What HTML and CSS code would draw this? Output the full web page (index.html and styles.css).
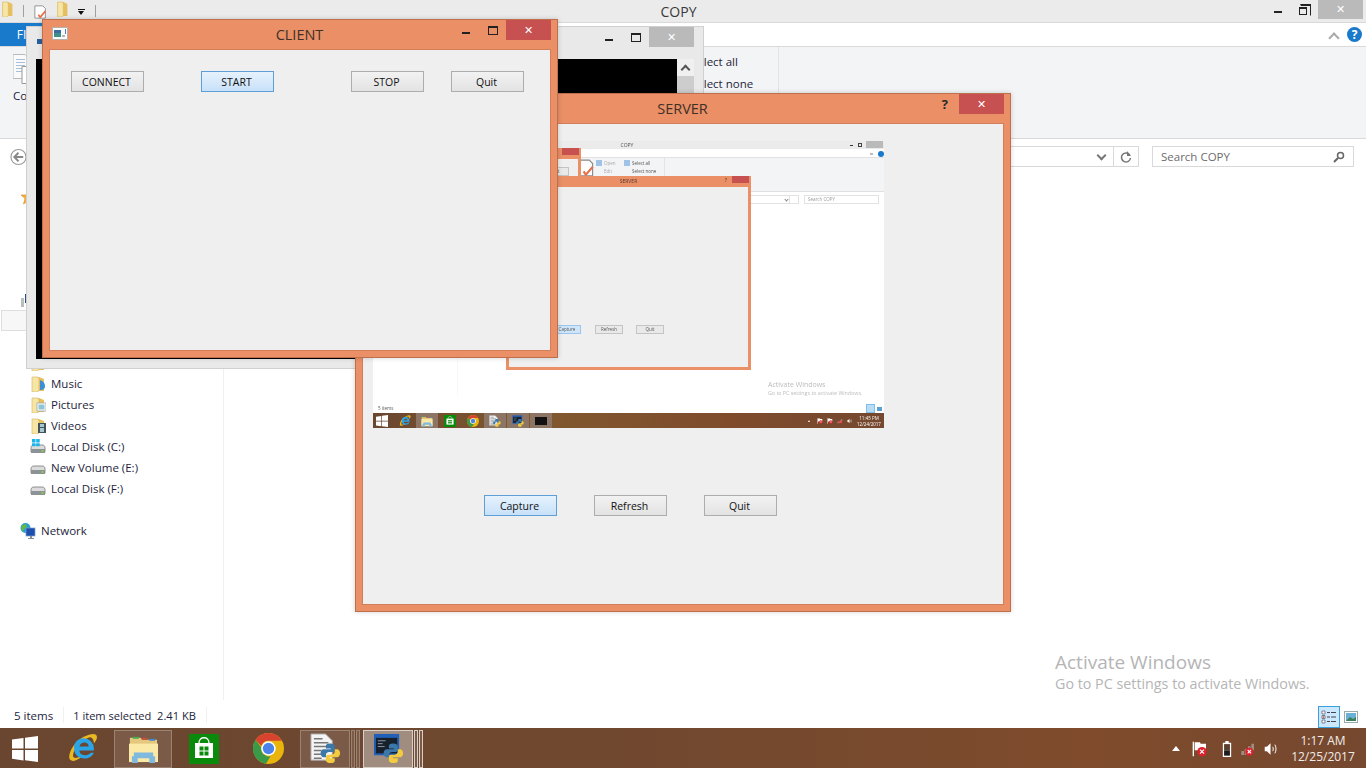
FILE: index.html
```html
<!DOCTYPE html>
<html lang="en">
<head>
  <meta charset="UTF-8" />
  <meta name="viewport" content="width=device-width, initial-scale=1.0" />
  <title>COPY</title>
  <link rel="stylesheet" href="styles.css">
</head>
<body>
  <svg class="defs" width="0" height="0">
    <symbol id="folder" viewBox="0 0 16 16" preserveAspectRatio="none">
      <path d="M2 1h7l5 2v12H2z" fill="#e6bf5e"/>
      <path d="M2 1h6l1 2v12l-2 1H2z" fill="#f6e6a6" stroke="#d8b35a" stroke-width=".6"/>
    </symbol>
    <symbol id="folderMusic" viewBox="0 0 16 16">
      <use href="#folder"/>
      <path d="M10 4c3 1 5 3 5 6s-2 4-5 4z" fill="#3b8fd6"/>
    </symbol>
    <symbol id="folderPics" viewBox="0 0 16 16">
      <use href="#folder"/>
      <rect x="7" y="6" width="9" height="8" fill="#fff" stroke="#999" stroke-width=".7"/>
      <rect x="8.500" y="7.500" width="6" height="5" fill="#8cc6d8"/>
    </symbol>
    <symbol id="folderVideo" viewBox="0 0 16 16">
      <use href="#folder"/>
      <rect x="8" y="5" width="8" height="10" fill="#44525c"/>
      <path d="M10 6h4v3h-4zM10 10h4v4h-4z" fill="#a8c6d0"/>
    </symbol>
    <symbol id="disk" viewBox="0 0 16 16">
      <path d="M1 9c0-2 1-3 3-3h8c2 0 3 1 3 3v4H1z" fill="#dcdcdc" stroke="#777" stroke-width=".8"/>
      <rect x="1" y="10" width="14" height="4" fill="#8d9296"/>
      <rect x="11.500" y="11" width="2" height="2" fill="#7fd046"/>
    </symbol>
    <symbol id="winDisk" viewBox="0 0 16 16">
      <use href="#disk"/>
      <path d="M2 0h3.500v3.500H2zM6.200 0h3.500v3.500H6.200zM2 4.200h3.500v3H2zM6.200 4.200h3.500v3H6.200z" fill="#1ab4ee"/>
    </symbol>
    <symbol id="globe" viewBox="0 0 16 16">
      <circle cx="5.500" cy="5" r="5" fill="#2a9bd6"/>
      <path d="M2 2l4-1 1 3-3 2-1 3-2-3z" fill="#5dbb46"/>
      <rect x="6" y="5" width="9" height="8" fill="#1c4fae" stroke="#7da0c8" stroke-width=".7"/>
      <path d="M10 13h2v2h2v1H8v-1h2z" fill="#8a8f94"/>
    </symbol>
    <symbol id="windows" viewBox="0 0 26 26">
      <path d="M0 3.600 11.500 2v10.500H0zM13 1.800 26 0v12.500H13zM0 14h11.500v10.400L0 22.800zM13 14h13v12l-13-1.800z" fill="#fff"/>
    </symbol>
    <symbol id="ie" viewBox="0 0 30 30">
      <path d="M3 26C0 22 6 8 18 3c6-3 11-3 11 1 0 2-2 5-3 6 0-3-1-5-3-6C14 5 5 17 6 23c1 2 5 1 8-1l-1 2c-4 3-8 4-10 2z" fill="#e8b923"/>
      <path d="M16 5a10 10 0 0 1 10 10v2H12c0 5 7 6 11 2h3c-3 8-18 8-19-3C6 10 10 5 16 5zm-4 8h9c0-5-8-5-9 0z" fill="#2aa6e8"/>
    </symbol>
    <symbol id="explorer" viewBox="0 0 32 30">
      <path d="M2 4h11l2 2h15v22H2z" fill="#e6c77e"/>
      <rect x="5" y="3" width="6" height="2" fill="#3fb34f"/>
      <rect x="14" y="4" width="6" height="2" fill="#c94f3c"/>
      <rect x="22" y="5" width="6" height="2" fill="#3d88cf"/>
      <path d="M1 10h30v19H1z" fill="#fbe9a8"/>
      <path d="M6 19h20v4h2v7h-6v-5H10v5H4v-7h2z" fill="#7fb9dd"/>
    </symbol>
    <symbol id="store" viewBox="0 0 30 30">
      <rect width="30" height="30" fill="#0a8a0a"/>
      <path d="M6 9h18v15H6z" fill="#fff"/>
      <path d="M10 9c0-7 10-7 10 0" fill="none" stroke="#fff" stroke-width="1.300"/>
      <path d="M10.500 12.500h4v4h-4zM15.500 12.500h4v4h-4zM10.500 17.500h4v4h-4zM15.500 17.500h4v4h-4z" fill="#0a8a0a"/>
    </symbol>
    <symbol id="chrome" viewBox="0 0 30 30">
      <circle cx="15" cy="15" r="15" fill="#e9b50c"/>
      <path d="M15 0a15 15 0 0 1 13 7.500H15a7.500 7.500 0 0 0-7 5L2.500 6.500A15 15 0 0 1 15 0z" fill="#d8432f"/>
      <path d="M2.500 6.500 8 14a7.500 7.500 0 0 0 9 8.500l-4.500 7.300A15 15 0 0 1 2.500 6.500z" fill="#3b9a48"/>
      <circle cx="15" cy="15" r="7" fill="#fff"/>
      <circle cx="15" cy="15" r="5.500" fill="#4b84e8"/>
    </symbol>
    <symbol id="python" viewBox="0 0 24 24">
      <path d="M12 1C8 1 7 2.500 7 4v2.500h5.500v1H4.500C2.500 7.500 1 9.500 1 12s1.500 4.500 3.500 4.500H7V14c0-2 1.500-3.500 3.500-3.500h4c1.500 0 2.500-1 2.500-2.500V4c0-1.500-2-3-5-3z" fill="#3b77a8"/>
      <path d="M12 23c4 0 5-1.500 5-3v-2.500h-5.500v-1h8c2 0 3.500-2 3.500-4.500s-1.500-4.500-3.500-4.500H17V10c0 2-1.500 3.500-3.500 3.500h-4C8 13.500 7 14.500 7 16v4c0 1.500 2 3 5 3z" fill="#f2cb3f"/>
    </symbol>
    <symbol id="pyFile" viewBox="0 0 32 32">
      <path d="M1 1h15l7 7v20H1z" fill="#f4f4f4" stroke="#aaa"/>
      <path d="M4 6h9M4 10h15M4 14h15M4 18h8M4 22h8M4 26h8" stroke="#777" stroke-width="1.500"/>
      <use href="#python" x="10" y="10" width="22" height="22"/>
    </symbol>
    <symbol id="pyApp" viewBox="0 0 32 32">
      <rect x="1" y="1" width="26" height="22" fill="#2060b8"/>
      <rect x="3" y="5" width="22" height="16" fill="#18202c"/>
      <path d="M5 8h8M5 11h5M5 14h7" stroke="#8a9aa8"/>
      <use href="#python" x="10" y="10" width="22" height="22"/>
    </symbol>
    <symbol id="flag" viewBox="0 0 24 24">
      <path d="M2 1v22" stroke="#fff" stroke-width="2"/>
      <path d="M4 2h8l1 2h8v10H4z" fill="#fff"/>
      <circle cx="15" cy="16" r="7" fill="#e01f2d"/>
      <path d="m12 13 6 6m0-6-6 6" stroke="#fff" stroke-width="1.800"/>
    </symbol>
    <symbol id="battery" viewBox="0 0 12 18" preserveAspectRatio="none">
      <path d="M4 0h4v2h3v16H1V2h3z" fill="#fff"/>
      <rect x="2.500" y="3.500" width="7" height="7" fill="#5a3e2e"/>
      <rect x="2.500" y="10.500" width="7" height="6" fill="#1c1c1c"/>
    </symbol>
    <symbol id="signal" viewBox="0 0 24 20">
      <path d="M2 13h4v6H2zM7 10h4v9H7zM12 6h4v5h-4zM17 2h4v10h-4z" fill="#a08d80"/>
      <circle cx="14" cy="14" r="6" fill="#e01f2d"/>
      <path d="m11.500 11.500 5 5m0-5-5 5" stroke="#fff" stroke-width="1.600"/>
    </symbol>
    <symbol id="speaker" viewBox="0 0 22 18">
      <path d="M1 6h3l5-5v16l-5-5H1z" fill="#fff"/>
      <path d="M12 6c1 2 1 4 0 6M15 3c2 4 2 8 0 12" fill="none" stroke="#fff" stroke-width="1.300"/>
    </symbol>
    <symbol id="detailsView" viewBox="0 0 16 14">
      <path d="M1 1h3v3H1zM1 5.500h3v3H1zM1 10h3v3H1z" fill="#fff" stroke="#556"  stroke-width=".7"/>
      <rect x="1.800" y="6.300" width="1.400" height="1.400" fill="#d03030"/>
      <path d="M6 2.500h3M10 2.500h5M6 7h3M10 7h5M6 11.500h3M10 11.500h5" stroke="#445"/>
    </symbol>
    <symbol id="tileView" viewBox="0 0 14 12">
      <rect x=".5" y=".5" width="13" height="11" fill="#fff" stroke="#9aa"/>
      <rect x="2" y="2" width="10" height="8" fill="#6ab0d8"/>
      <path d="M2 10l4-4 3 2 3-2v4z" fill="#3d7f5a"/>
    </symbol>
    <symbol id="copyIcon" viewBox="0 0 20 30">
      <path d="M0 0h12l3 3v21H0z" fill="#fafafa" stroke="#bbb"/>
      <path d="M3 5h9M3 8h9M3 11h9M3 14h9M3 17h9" stroke="#a8c0d8"/>
      <path d="M9 12h10v17H9z" fill="#fff" stroke="#999"/>
    </symbol>
    <symbol id="docCheck" viewBox="0 0 16 16">
      <path d="M1 1h9l3 3v11H1z" fill="#fff" stroke="#888"/>
      <path d="M5 11l2 3 6-7" fill="none" stroke="#e8704a" stroke-width="2"/>
    </symbol>
    <symbol id="appIcon" viewBox="0 0 16 13">
      <rect x=".5" y=".5" width="15" height="12" fill="#fafafa" stroke="#b9b0a8"/>
      <rect x="2" y="3" width="7" height="7" fill="#3f8f86"/>
      <rect x="2" y="3" width="7" height="3" fill="#3a6ca0"/>
      <rect x="10" y="8" width="3" height="2" fill="#b5b5b5"/>
      <rect x="13" y="2" width="1" height="5" fill="#4a80c0"/>
    </symbol>
    <symbol id="search" viewBox="0 0 12 12">
      <circle cx="7.500" cy="4.500" r="3" fill="none" stroke="#666" stroke-width="1.500"/>
      <path d="M5 7l-4 4" stroke="#666" stroke-width="2"/>
    </symbol>
    <symbol id="refresh" viewBox="0 0 12 12">
      <path d="M9.800 4A4.500 4.500 0 1 0 10.500 7" fill="none" stroke="#777" stroke-width="1.500"/>
      <path d="M7 0v5h4z" fill="#777"/>
    </symbol>
    <symbol id="back" viewBox="0 0 18 18">
      <circle cx="9" cy="9" r="8" fill="#fff" stroke="#999" stroke-width="1.200"/>
      <path d="M4 9h10M9 4.500 4.500 9 9 13.500" fill="none" stroke="#888" stroke-width="2"/>
    </symbol>
    <symbol id="star" viewBox="0 0 16 16">
      <path d="M8 1l2 5h5l-4 3.500L12.500 15 8 12l-4.500 3L5 9.500 1 6h5z" fill="#f2b33d" stroke="#d68a1e" stroke-width=".6"/>
    </symbol>
    <symbol id="pc" viewBox="0 0 16 16">
      <rect x="1" y="6" width="3" height="9" fill="#b8c0b8"/>
      <rect x="5" y="2" width="11" height="9" fill="#274d8f"/>
    </symbol>
  </svg>

  <div class="desktop">
    <!-- explorer behind everything -->
    <div class="explorer">
      <div class="titlebar">
        <div class="quick">
          <svg class="q-folder"><use href="#folder"/></svg>
          <span class="qsep"></span>
          <svg class="q-doc"><use href="#docCheck"/></svg>
          <svg class="q-folder"><use href="#folder"/></svg>
          <span class="qdrop"></span>
          <span class="qsep"></span>
        </div>
        <div class="title-text">COPY</div>
        <div class="winbtns">
          <span class="btn-min"></span>
          <span class="btn-restore"></span>
          <span class="btn-close btn-close-gray">&#10005;</span>
        </div>
      </div>
      <div class="tabs">
        <div class="file-tab">FILE</div>
        <span class="tabs-chevron"></span>
        <span class="help">?</span>
      </div>
      <div class="ribbon">
        <div class="rib-copy">
          <svg class="ico-copy"><use href="#copyIcon"/></svg>
          <span>Copy</span>
        </div>
        <div class="rib-select">
          <span>Select all</span>
          <span>Select none</span>
        </div>
        <div class="rib-div"></div>
      </div>
      <div class="addressbar">
        <svg class="ico-back"><use href="#back"/></svg>
        <div class="addr-box">
          <span class="addr-chevron"></span>
          <span class="addr-refresh"><svg class="ico12"><use href="#refresh"/></svg></span>
        </div>
        <div class="searchbox">
          <span>Search COPY</span>
          <svg class="ico12"><use href="#search"/></svg>
        </div>
      </div>
      <div class="main">
        <div class="nav">
          <div class="nav-row nav-head"><svg class="ico16"><use href="#star"/></svg>Favorites</div>
          <div class="nav-row nav-head nav-pc"><svg class="ico16"><use href="#pc"/></svg>This PC</div>
          <div class="nav-row nav-selected"><svg class="ico16"><use href="#folder"/></svg>Desktop</div>
          <div class="nav-row"><svg class="ico16"><use href="#folder"/></svg>Documents</div>
          <div class="nav-row"><svg class="ico16"><use href="#folder"/></svg>Downloads</div>
          <div class="nav-row"><svg class="ico16"><use href="#folderMusic"/></svg>Music</div>
          <div class="nav-row"><svg class="ico16"><use href="#folderPics"/></svg>Pictures</div>
          <div class="nav-row"><svg class="ico16"><use href="#folderVideo"/></svg>Videos</div>
          <div class="nav-row"><svg class="ico16"><use href="#winDisk"/></svg>Local Disk (C:)</div>
          <div class="nav-row"><svg class="ico16"><use href="#disk"/></svg>New Volume (E:)</div>
          <div class="nav-row"><svg class="ico16"><use href="#disk"/></svg>Local Disk (F:)</div>
          <div class="nav-row nav-head nav-net"><svg class="ico16"><use href="#globe"/></svg>Network</div>
        </div>
        <div class="files">
          <div class="activate">
            <div class="activate-big">Activate Windows</div>
            <div class="activate-small">Go to PC settings to activate Windows.</div>
          </div>
        </div>
      </div>
      <div class="statusbar">
        <span class="st-items">5 items</span>
        <span class="st-sep"></span>
        <span class="st-sel">1 item selected&nbsp; 2.41 KB</span>
        <span class="st-sep"></span>
        <div class="views">
          <span class="view-on"><svg class="ico-view"><use href="#detailsView"/></svg></span>
          <svg class="ico-tile"><use href="#tileView"/></svg>
        </div>
      </div>
    </div>

    <div class="taskbar">
      <div class="tb-item"><svg class="tb-win"><use href="#windows"/></svg></div>
      <div class="tb-item"><svg class="tb-ico"><use href="#ie"/></svg></div>
      <div class="tb-item tb-open"><svg class="tb-ico"><use href="#explorer"/></svg></div>
      <div class="tb-item"><svg class="tb-store"><use href="#store"/></svg></div>
      <div class="tb-item"><svg class="tb-ico"><use href="#chrome"/></svg></div>
      <div class="tb-item tb-open tb-stack"><svg class="tb-ico"><use href="#pyFile"/></svg></div>
      <span class="tb-edge"></span><span class="tb-edge"></span>
      <div class="tb-item tb-open tb-stack tb-active"><svg class="tb-ico"><use href="#pyApp"/></svg></div>
      <span class="tb-edge"></span><span class="tb-edge"></span>
      <div class="tray">
        <span class="tray-up"></span>
        <svg class="tray-flag"><use href="#flag"/></svg>
        <svg class="tray-bat"><use href="#battery"/></svg>
        <svg class="tray-sig"><use href="#signal"/></svg>
        <svg class="tray-vol"><use href="#speaker"/></svg>
        <div class="clock"><div>1:17 AM</div><div>12/25/2017</div></div>
      </div>
    </div>

    <!-- console window -->
    <div class="win console">
      <div class="console-bar">
        <span class="console-dot"></span>
        <div class="winbtns">
          <span class="btn-min"></span>
          <span class="btn-max"></span>
          <span class="btn-close btn-close-gray">&#10005;</span>
        </div>
      </div>
      <div class="console-body">
        <div class="console-black"></div>
        <div class="scroll"><span class="scroll-up"></span><span class="scroll-thumb"></span></div>
      </div>
    </div>

    <!-- server window -->
    <div class="win qt server">
      <div class="qt-title">
        <span class="qt-name">SERVER</span>
        <div class="qt-btns">
          <span class="btn-q">?</span>
          <span class="btn-close btn-close-red">&#10005;</span>
        </div>
      </div>
      <div class="qt-body server-body">
        <div class="shot">
          <div class="m-title">COPY
            <span class="m-min"></span><span class="m-rest"></span><span class="m-close"></span>
          </div>
          <div class="m-tabs"><span class="m-chev"></span><span class="m-help"></span></div>
          <div class="m-ribbon">
            <svg class="m-check"><use href="#docCheck"/></svg>
            <div class="m-group m-g1"><span>Open</span><span>Edit</span></div>
            <div class="m-group m-g2"><span>Select all</span><span>Select none</span></div>
          </div>
          <div class="m-addr">
            <span class="m-ref"></span>
            <span class="m-search">Search COPY</span>
          </div>
          <div class="m-main">
            <span class="m-navline"></span>
            <div class="m-activate">
              <div class="m-act-big">Activate Windows</div>
              <div class="m-act-small">Go to PC settings to activate Windows.</div>
            </div>
          </div>
          <div class="m-status"><span>5 items</span><span class="m-view"></span><span class="m-view2"></span></div>
          <div class="m-taskbar">
            <svg class="m-tb"><use href="#windows"/></svg>
            <svg class="m-tb"><use href="#ie"/></svg>
            <span class="m-open"><svg class="m-tb"><use href="#explorer"/></svg></span>
            <svg class="m-tb"><use href="#store"/></svg>
            <svg class="m-tb"><use href="#chrome"/></svg>
            <span class="m-open"><svg class="m-tb"><use href="#pyFile"/></svg></span>
            <span class="m-open"><svg class="m-tb"><use href="#pyApp"/></svg></span>
            <span class="m-open"><span class="m-cmd"></span></span>
            <div class="m-tray">
              <span class="m-up"></span>
              <svg class="m-tr"><use href="#flag"/></svg>
              <svg class="m-tr"><use href="#flag"/></svg>
              <svg class="m-tr"><use href="#signal"/></svg>
              <svg class="m-tr"><use href="#speaker"/></svg>
              <div class="m-clock"><div>11:45 PM</div><div>12/24/2017</div></div>
            </div>
          </div>

          <div class="m-win m-client">
            <div class="m-win-title"><span class="m-win-close"></span></div>
            <div class="m-win-body"><span class="m-btn m-client-btn">Quit</span></div>
          </div>
          <div class="m-win m-server">
            <div class="m-win-title m-server-title">SERVER<span class="m-q">?</span><span class="m-win-close"></span></div>
            <div class="m-win-body m-server-body">
              <span class="m-btn m-btn-cap">Capture</span>
              <span class="m-btn m-btn-ref">Refresh</span>
              <span class="m-btn m-btn-quit">Quit</span>
            </div>
          </div>
        </div>
        <div class="btn-row server-btns">
          <button class="pbtn pbtn-active">Capture</button>
          <button class="pbtn">Refresh</button>
          <button class="pbtn">Quit</button>
        </div>
      </div>
    </div>

    <!-- client window -->
    <div class="win qt client">
      <div class="qt-title">
        <svg class="app-ico"><use href="#appIcon"/></svg>
        <span class="qt-name">CLIENT</span>
        <div class="qt-btns">
          <span class="btn-min"></span>
          <span class="btn-max"></span>
          <span class="btn-close btn-close-red">&#10005;</span>
        </div>
      </div>
      <div class="qt-body client-body">
        <div class="btn-row client-btns">
          <button class="pbtn">CONNECT</button>
          <button class="pbtn pbtn-active">START</button>
          <button class="pbtn">STOP</button>
          <button class="pbtn">Quit</button>
        </div>
      </div>
    </div>
  </div>
</body>
</html>
```

FILE: styles.css
```css
* {
  box-sizing: border-box;
}
html, body {
  margin: 0;
  padding: 0;
}
body {
  font-family: "Open Sans", "Noto Sans", sans-serif;
  font-size: 11.5px;
  color: #1e1e3c;
  background-color: white;
  overflow: hidden;
}
.defs {
  position: absolute;
}
svg {
  display: block;
  flex: none;
}
.ico16 {
  width: 16px;
  height: 16px;
}
.ico12 {
  width: 12px;
  height: 12px;
}
.desktop {
  position: relative;
  width: 1366px;
  height: 768px;
  overflow: hidden;
  display: flex;
  flex-direction: column;
}

/* explorer */
.explorer {
  flex: 1;
  min-height: 0;
  display: flex;
  flex-direction: column;
}
.titlebar {
  position: relative;
  height: 23px;
  flex: none;
  background-color: #ebebeb;
  border-bottom: 1px solid #d9d9d9;
  display: flex;
  align-items: flex-start;
}
.quick {
  display: flex;
  align-items: center;
  height: 22px;
}
.q-folder {
  width: 13px;
  height: 16px;
  margin-top: -4px;
}
.q-doc {
  width: 14px;
  height: 16px;
  margin: 2px 8px 0 10px;
}
.qsep {
  width: 1px;
  height: 12px;
  background-color: #a0a0a0;
  margin-left: 9px;
}
.qdrop {
  position: relative;
  width: 7px;
  height: 6px;
  margin: 2px 0 0 9px;
  border-top: 1px solid #111;
}
.qdrop::after {
  content: "";
  position: absolute;
  left: 0;
  top: 1px;
  border-left: 3.500px solid transparent;
  border-right: 3.500px solid transparent;
  border-top: 4px solid #111;
}
.quick .qdrop + .qsep {
  margin-left: 10px;
}
.quick > .q-folder:first-child {
  margin-left: 1px;
}
.title-text {
  position: absolute;
  left: 0;
  right: 9px;
  top: 2px;
  text-align: center;
  font-size: 14px;
  color: #3a3a3a;
}
.winbtns {
  margin-left: auto;
  display: flex;
  align-items: flex-start;
  padding-right: 3px;
}
.btn-min {
  width: 8px;
  height: 2px;
  background-color: #222;
  margin: 11px 17px 0 0;
}
.btn-max {
  width: 10px;
  height: 9px;
  border: 1px solid #222;
  border-top-width: 2px;
  margin: 6px 0 0 18px;
}
.btn-restore {
  width: 8px;
  height: 8px;
  border: 1px solid #222;
  border-top-width: 2px;
  margin: 7px 0 0 0;
  position: relative;
}
.btn-restore::after {
  content: "";
  position: absolute;
  left: 0;
  top: -5px;
  width: 9px;
  height: 9px;
  border: 1px solid #222;
  border-top-width: 2px;
  border-left-color: transparent;
  border-bottom-color: transparent;
}
.btn-close {
  width: 45px;
  height: 19px;
  display: flex;
  align-items: center;
  justify-content: center;
  color: white;
  font-size: 11px;
  font-weight: bold;
  font-family: "DejaVu Sans", sans-serif;
}
.btn-close-gray {
  background-color: #bababa;
  margin-left: 11px;
}
.btn-close-red {
  background-color: #c75050;
  margin-left: 8px;
}
.tabs {
  height: 24px;
  flex: none;
  background-color: white;
  border-bottom: 1px solid #dadada;
  display: flex;
  align-items: center;
}
.file-tab {
  width: 56px;
  height: 23px;
  background-color: #1979ca;
  color: white;
  font-size: 12px;
  line-height: 23px;
  text-align: center;
}
.tabs-chevron {
  margin-left: auto;
  width: 8px;
  height: 8px;
  border-left: 2px solid #aaa;
  border-top: 2px solid #aaa;
  transform: rotate(45deg);
  margin-top: 6px;
}
.help {
  width: 15px;
  height: 15px;
  border-radius: 50%;
  background-color: #1979ca;
  color: white;
  font-weight: bold;
  font-size: 12px;
  line-height: 15px;
  text-align: center;
  margin: 0 4px 0 9px;
}
.ribbon {
  height: 92px;
  flex: none;
  background-color: #f3f4f6;
  border-bottom: 1px solid #d9d9d9;
  display: flex;
  align-items: flex-start;
}
.rib-copy {
  margin: 7px 0 0 13px;
  display: flex;
  flex-direction: column;
  gap: 3px;
}
.ico-copy {
  width: 20px;
  height: 31px;
}
.rib-select {
  margin: 6px 0 0 651px;
  display: flex;
  flex-direction: column;
  gap: 5px;
  line-height: 17px;
  width: 87px;
}
.rib-div {
  width: 1px;
  height: 87px;
  background-color: #e2e3e5;
}
.addressbar {
  height: 36px;
  flex: none;
  display: flex;
  align-items: flex-start;
  padding: 7px 12px 0 10px;
}
.ico-back {
  width: 17px;
  height: 18px;
  margin-top: 2px;
}
.addr-box {
  flex: 1;
  height: 21px;
  margin-left: 22px;
  border: 1px solid #d9d9d9;
  display: flex;
  align-items: center;
  justify-content: flex-end;
}
.addr-chevron {
  width: 7px;
  height: 7px;
  border-right: 2px solid #777;
  border-bottom: 2px solid #777;
  transform: rotate(45deg);
  margin: 0 8px 3px 0;
}
.addr-refresh {
  width: 25px;
  height: 19px;
  border-left: 1px solid #d9d9d9;
  display: flex;
  align-items: center;
  justify-content: center;
}
.searchbox {
  width: 202px;
  height: 21px;
  margin-left: 13px;
  border: 1px solid #d9d9d9;
  display: flex;
  align-items: center;
  justify-content: space-between;
  padding: 0 8px;
  color: #6d6d6d;
}
.main {
  flex: 1;
  min-height: 0;
  display: flex;
}
.nav {
  width: 224px;
  flex: none;
  border-right: 1px solid #f0f0f0;
  padding-top: 11px;
}
.nav-row {
  height: 21px;
  display: flex;
  align-items: center;
  gap: 5px;
  padding-left: 30px;
}
.nav-head {
  padding-left: 20px;
}
.nav-pc {
  margin-top: 82px;
}
.nav-net {
  margin-top: 21px;
}
.nav-selected {
  margin-left: 1px;
  padding-left: 29px;
  border: 1px solid #dedede;
  background-color: #f7f7f7;
}
.files {
  flex: 1;
  position: relative;
}
.activate {
  position: absolute;
  left: 831px;
  top: 474px;
  color: #b5b5b5;
}
.activate-big {
  font-size: 19px;
  line-height: 26px;
}
.activate-small {
  font-size: 14.300px;
  line-height: 18px;
  white-space: nowrap;
}
.statusbar {
  height: 28px;
  flex: none;
  display: flex;
  align-items: center;
  padding: 2px 8px 0 14px;
}
.st-sel {
  font-size: 11.100px;
  margin-left: -1px;
}
.st-sep {
  width: 1px;
  height: 16px;
  background-color: #f0f0f0;
  margin: 0 10px;
}
.views {
  margin: 4px 0 0 auto;
  display: flex;
  align-items: center;
  gap: 4px;
}
.view-on {
  width: 22px;
  height: 22px;
  background-color: #cce8ff;
  border: 1px solid #3a9fdc;
  display: flex;
  align-items: center;
  justify-content: center;
}
.ico-view {
  width: 16px;
  height: 14px;
}
.ico-tile {
  width: 14px;
  height: 12px;
}

/* taskbar */
.taskbar {
  height: 40px;
  flex: none;
  display: flex;
  align-items: center;
  padding-top: 1px;
  background: linear-gradient(90deg, #6a4630 0%, #70482f 45%, #7f4b2c 80%, #75482f 100%);
  color: white;
}
.tb-item {
  width: 58px;
  height: 38px;
  flex: none;
  display: flex;
  align-items: center;
  justify-content: center;
}
.tb-item:nth-child(1) {
  width: 50px;
}
.tb-item:nth-child(2) {
  width: 64px;
}
.tb-item:nth-child(4) {
  width: 64px;
}
.tb-item:nth-child(5) {
  width: 64px;
}
.tb-open {
  background-color: #7b5b48;
  border: 1px solid #9a8373;
}
.tb-item.tb-stack {
  width: 50px;
}
.tb-item.tb-active {
  background-color: #a08d80;
  border-color: #d8cfc8;
  margin-left: 3px;
}
.tb-edge {
  width: 4px;
  height: 38px;
  margin-left: 1px;
  background-color: #7b5b48;
  border: 1px solid #9a8373;
}
.tb-active + .tb-edge,
.tb-active + .tb-edge + .tb-edge {
  border-color: #d8cfc8;
}
.tb-win {
  width: 26px;
  height: 26px;
}
.tb-ico {
  width: 31px;
  height: 31px;
}
.tb-store {
  width: 30px;
  height: 30px;
}
.tray {
  margin-left: auto;
  display: flex;
  align-items: center;
  padding-right: 2px;
}
.tray-up {
  width: 0;
  height: 0;
  border-left: 4px solid transparent;
  border-right: 4px solid transparent;
  border-bottom: 5px solid white;
}
.tray-flag {
  width: 16px;
  height: 16px;
  margin-left: 12px;
}
.tray-bat {
  width: 10px;
  height: 16px;
  margin-left: 14px;
}
.tray-sig {
  width: 16px;
  height: 14px;
  margin-left: 8px;
}
.tray-vol {
  width: 16px;
  height: 14px;
  margin-left: 8px;
}
.clock {
  width: 82px;
  margin-left: 2px;
  text-align: center;
  font-size: 12px;
  line-height: 16px;
  color: #f2ece8;
}

/* floating windows */
.win {
  position: absolute;
  display: flex;
  flex-direction: column;
}
.console {
  left: 26px;
  top: 26px;
  width: 678px;
  height: 343px;
  background-color: #e9e9e9;
  border: 1px solid #d0d0d0;
}
.console-bar {
  height: 32px;
  flex: none;
  display: flex;
  align-items: flex-start;
}
.console-dot {
  width: 5px;
  height: 5px;
  margin: 12px 0 0 10px;
  background-color: #26609c;
}
.console-bar .btn-close {
  height: 20px;
  margin-left: 8px;
}
.console-bar .winbtns {
  padding-right: 9px;
}
.console-bar .btn-min {
  margin: 12px 0 0 0;
}
.console-body {
  flex: 1;
  display: flex;
  padding: 0 9px 9px 9px;
}
.console-black {
  flex: 1;
  background-color: black;
}
.scroll {
  width: 17px;
  flex: none;
  background-color: #f0f0f0;
  display: flex;
  flex-direction: column;
  align-items: center;
}
.scroll-up {
  width: 7px;
  height: 7px;
  margin-top: 7px;
  border-left: 2px solid #555;
  border-top: 2px solid #555;
  transform: rotate(45deg);
}
.scroll-thumb {
  width: 100%;
  height: 60px;
  margin-top: 3px;
  background-color: #cdcdcd;
}
.qt {
  background-color: #ea8f66;
  border: 1px solid #bd6f4e;
  box-shadow: 0 0 5px rgba(0, 0, 0, 0.18);
  padding: 0 6px 6px 6px;
}
.qt-title {
  position: relative;
  height: 29px;
  flex: none;
  display: flex;
  align-items: flex-start;
}
.qt-name {
  position: absolute;
  left: 0;
  right: 1px;
  top: 5px;
  text-align: center;
  font-size: 14.500px;
  color: #403028;
}
.app-ico {
  width: 16px;
  height: 13px;
  margin: 7px 0 0 3px;
}
.qt-btns {
  position: relative;
  margin-left: auto;
  display: flex;
  align-items: flex-start;
}
.qt-btns .btn-close {
  height: 20px;
}
.qt-btns .btn-min {
  margin: 12px 0 0 0;
}
.btn-q {
  color: #2a2a2a;
  font-weight: bold;
  font-size: 13px;
  margin: 1px 3px 0 0;
}
.qt-body {
  flex: 1;
  background-color: #efefef;
  border: 1px solid #d27e5a;
}
.client {
  left: 42px;
  top: 19px;
  width: 516px;
  height: 339px;
}
.client-body {
  padding: 21px 0 0 21px;
}
.server {
  left: 355px;
  top: 93px;
  width: 656px;
  height: 519px;
}
.server-body {
  padding: 17px 0 0 10px;
}
.btn-row {
  display: flex;
}
.client-btns .pbtn:nth-child(2) {
  margin-left: 57px;
}
.client-btns .pbtn:nth-child(3) {
  margin-left: 77px;
}
.client-btns .pbtn:nth-child(4) {
  margin-left: 27px;
}
.server-btns {
  margin: 67px 0 0 111px;
  gap: 37px;
}
.pbtn {
  width: 73px;
  height: 21px;
  padding: 0 2px 0 0;
  font-family: "Open Sans", "Noto Sans", sans-serif;
  font-size: 10.500px;
  color: #111;
  background: linear-gradient(#f2f2f2, #e3e3e3);
  border: 1px solid #adadad;
  border-radius: 0;
}
.pbtn-active {
  background: linear-gradient(#e6f2fc, #c8e1f9);
  border-color: #5f9fd8;
}

/* nested capture of the desktop, a free canvas of its own */
.shot {
  position: relative;
  width: 511px;
  height: 287px;
  overflow: hidden;
  background-color: white;
  display: flex;
  flex-direction: column;
  font-size: 4.500px;
  filter: blur(0.35px);
  color: #555;
}
.m-title {
  position: relative;
  height: 8px;
  flex: none;
  background-color: #ebebeb;
  text-align: center;
  line-height: 8px;
  font-size: 5px;
  padding-right: 3px;
}
.m-min, .m-rest, .m-close {
  position: absolute;
  top: 0;
}
.m-min {
  left: 477px;
  top: 4px;
  width: 3px;
  height: 1px;
  background-color: #333;
}
.m-rest {
  left: 485px;
  top: 2px;
  width: 4px;
  height: 4px;
  border: 1px solid #444;
}
.m-close {
  left: 493px;
  width: 17px;
  height: 7px;
  background-color: #bababa;
}
.m-tabs {
  position: relative;
  height: 9px;
  flex: none;
  border-bottom: 1px solid #e2e2e2;
}
.m-chev {
  position: absolute;
  left: 497px;
  top: 4px;
  width: 3px;
  height: 2px;
  background-color: #bbb;
}
.m-help {
  position: absolute;
  left: 505px;
  top: 2px;
  width: 6px;
  height: 6px;
  border-radius: 50%;
  background-color: #1979ca;
}
.m-ribbon {
  position: relative;
  height: 34px;
  flex: none;
  background-color: #f3f4f6;
  border-bottom: 1px solid #e0e0e0;
}
.m-check {
  position: absolute;
  left: 205px;
  top: 1px;
  width: 18px;
  height: 18px;
}
.m-group {
  position: absolute;
  top: 2px;
  display: flex;
  flex-direction: column;
  gap: 2px;
  line-height: 6px;
  padding-left: 8px;
}
.m-group::before {
  content: "";
  position: absolute;
  left: 0;
  top: 0;
  width: 6px;
  height: 6px;
  background-color: #9fc2e6;
}
.m-g1 {
  left: 223px;
  color: #aaa;
}
.m-g2 {
  left: 251px;
}
.m-g2::after {
  content: "";
  position: absolute;
  left: 40px;
  top: -2px;
  width: 1px;
  height: 28px;
  background-color: #e2e3e5;
}
.m-addr {
  position: relative;
  height: 13px;
  flex: none;
}
.m-ref {
  position: absolute;
  left: 370px;
  top: 3px;
  width: 56px;
  height: 9px;
  border: 1px solid #e2e2e2;
}
.m-ref::before {
  content: "";
  position: absolute;
  right: 10px;
  top: 2px;
  width: 2px;
  height: 2px;
  border-right: 1px solid #888;
  border-bottom: 1px solid #888;
  transform: rotate(45deg);
}
.m-ref::after {
  content: "";
  position: absolute;
  right: 8px;
  top: 0;
  width: 1px;
  height: 7px;
  background-color: #e2e2e2;
}
.m-search {
  position: absolute;
  left: 431px;
  top: 3px;
  width: 75px;
  height: 9px;
  border: 1px solid #e2e2e2;
  line-height: 7px;
  padding-left: 3px;
  color: #999;
}
.m-main {
  position: relative;
  flex: 1;
}
.m-navline {
  position: absolute;
  left: 84px;
  top: 0;
  bottom: 8px;
  width: 1px;
  background-color: #f8f8f8;
}
.m-activate {
  position: absolute;
  left: 395px;
  bottom: 7px;
  color: #bcbcbc;
}
.m-act-big {
  font-size: 7px;
  line-height: 10px;
}
.m-act-small {
  font-size: 5.300px;
  line-height: 7px;
  white-space: nowrap;
}
.m-status {
  position: relative;
  height: 9px;
  flex: none;
  line-height: 9px;
  padding-left: 5px;
}
.m-view {
  position: absolute;
  left: 493px;
  top: 0;
  width: 9px;
  height: 9px;
  background-color: #b8dcf5;
  border: 1px solid #80bde8;
}
.m-view2 {
  position: absolute;
  left: 504px;
  top: 3px;
  width: 5px;
  height: 4px;
  background-color: #5aa0d0;
}
.m-taskbar {
  height: 15px;
  flex: none;
  display: flex;
  align-items: center;
  padding-left: 3px;
  gap: 10.700px;
  background: linear-gradient(90deg, #6a4630, #80592f 30%, #7f4b2c 70%, #75482f);
}
.m-tb {
  width: 12px;
  height: 12px;
}
.m-open {
  width: 22px;
  height: 15px;
  display: flex;
  align-items: center;
  justify-content: center;
  background-color: #8d7565;
  margin: 0 -5px;
}
.m-cmd {
  width: 12px;
  height: 8px;
  background-color: #111;
}
.m-tray {
  margin-left: auto;
  display: flex;
  align-items: center;
  gap: 4px;
  color: white;
}
.m-up {
  width: 0;
  height: 0;
  margin-right: 3px;
  border-left: 1.500px solid transparent;
  border-right: 1.500px solid transparent;
  border-bottom: 2px solid white;
}
.m-tr {
  width: 6px;
  height: 6px;
}
.m-clock {
  width: 30px;
  margin-left: -3px;
  text-align: center;
  line-height: 6px;
  font-size: 4.500px;
}
.m-win {
  position: absolute;
  display: flex;
  flex-direction: column;
  background-color: #ea8f66;
  padding: 0 3px 3px 3px;
}
.m-win-title {
  position: relative;
  height: 11px;
  flex: none;
  text-align: center;
  color: #5a3a2c;
  font-size: 5px;
  line-height: 11px;
}
.m-win-close {
  position: absolute;
  right: -1px;
  top: 0;
  width: 17px;
  height: 7px;
  background-color: #c75050;
}
.m-q {
  position: absolute;
  right: 21px;
  top: -1px;
  color: #333;
}
.m-win-body {
  position: relative;
  flex: 1;
  background-color: #efefef;
}
.m-client {
  left: 16px;
  top: 7px;
  width: 192px;
  height: 127px;
}
.m-client-btn {
  right: 9px;
  top: 8px;
}
.m-server {
  left: 133px;
  top: 35px;
  width: 245px;
  height: 194px;
}
.m-btn {
  position: absolute;
  width: 28px;
  height: 9px;
  line-height: 7px;
  text-align: center;
  background-color: #e9e9e9;
  border: 1px solid #c4c4c4;
  color: #555;
}
.m-btn-cap {
  left: 44px;
  top: 138px;
  background-color: #cfe5fa;
  border-color: #9cc4ec;
}
.m-btn-ref {
  left: 86px;
  top: 138px;
}
.m-btn-quit {
  left: 127px;
  top: 138px;
}
```
